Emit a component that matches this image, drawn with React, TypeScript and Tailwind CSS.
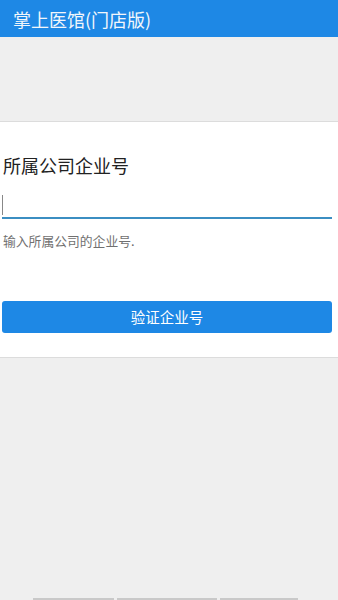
import React from 'react';

const font = { fontFamily: '"Noto Sans CJK SC", "Noto Sans", sans-serif' };

const App = () => {
  return (
    <div className="flex h-[600px] w-full flex-col bg-[#efefef]" style={font}>
      <header className="flex h-[37px] items-center bg-[#1e88e5] px-[13px]">
        <h1 className="text-[18px] leading-none text-[#f2f6fb]">掌上医馆(门店版)</h1>
      </header>

      <div className="h-[84px]" />

      <section className="border-y border-[#dcdcdc] bg-white pl-[2px] pr-[6px]">
        <h2 className="mt-[31px] pl-px text-[18px] leading-[24px] text-[#222]">所属公司企业号</h2>

        <div className="mt-[15px] flex h-[27px] items-center border-b-2 border-[#3b8ec2]">
          <span className="h-[20px] w-px bg-[#888]" />
        </div>

        <p className="mt-[13px] pl-px text-[12.8px] leading-[18px] text-[#707070]">输入所属公司的企业号.</p>

        <button className="mb-[24px] mt-[51px] flex h-[32px] w-full items-center justify-center rounded-[3px] bg-[#1e88e5] text-[14.5px] text-white">
          验证企业号
        </button>
      </section>

      <div className="flex flex-1 flex-col justify-end">
        <div className="flex h-[2px] gap-[3px] pl-[33px]">
          <div className="w-[81px] bg-[#c9c9c9]" />
          <div className="w-[100px] bg-[#c9c9c9]" />
          <div className="w-[78px] bg-[#c9c9c9]" />
        </div>
      </div>
    </div>
  );
};

export default App;
